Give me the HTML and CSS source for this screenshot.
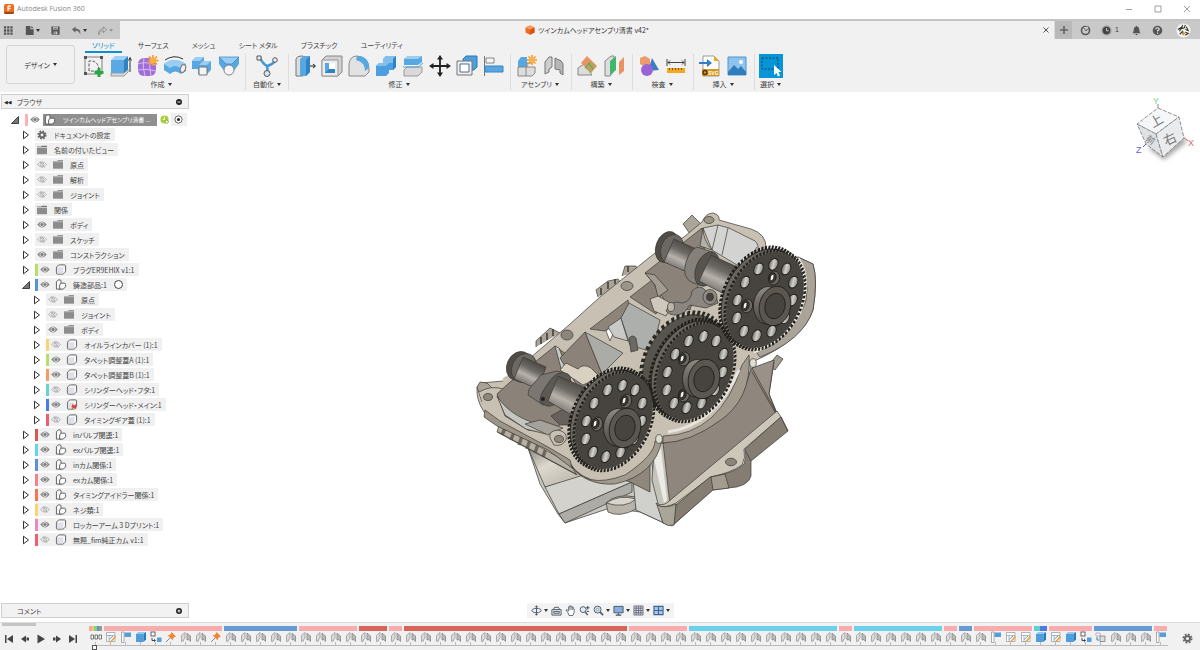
FILE: index.html
```html
<!DOCTYPE html>
<html lang="ja">
<head>
<meta charset="utf-8">
<title>Autodesk Fusion 360</title>
<link rel="stylesheet" href="styles.css">
</head>
<body>
<svg class="defs" aria-hidden="true">
  <defs>
    <linearGradient id="shaft" x1="0" y1="1" x2="0.5" y2="0"><stop offset="0" stop-color="#4b4844"/><stop offset=".3" stop-color="#85807b"/><stop offset=".5" stop-color="#b8b2ac"/><stop offset=".7" stop-color="#6d6964"/><stop offset="1" stop-color="#45423d"/></linearGradient>
    <linearGradient id="hubside" x1="0" y1="0" x2="0" y2="1"><stop offset="0" stop-color="#8f8b85"/><stop offset=".4" stop-color="#706b65"/><stop offset="1" stop-color="#4a4640"/></linearGradient>
    <linearGradient id="holeFill" x1="0" y1="0" x2="1" y2="0"><stop offset="0" stop-color="#6a665f"/><stop offset=".5" stop-color="#d2d2cd"/><stop offset="1" stop-color="#8b877f"/></linearGradient>
    <linearGradient id="shell" x1="0" y1="0" x2="1" y2="1"><stop offset="0" stop-color="#8d887e"/><stop offset=".35" stop-color="#ded9cf"/><stop offset="1" stop-color="#a9a59b"/></linearGradient>
    <symbol id="arrow" viewBox="0 0 8 10"><path d="M1.5 1.2 6.5 5 1.5 8.8Z" fill="#fff" stroke="#333" stroke-width="1"/></symbol>
    <symbol id="arrow-open" viewBox="0 0 8 10"><path d="M7.5 1.5V8.500H.5Z" fill="#777" stroke="#222" stroke-width=".8"/></symbol>
    <symbol id="eye" viewBox="0 0 12 10"><path d="M.8 5Q6-1.6 11.2 5 6 11.600 .8 5Z" fill="#808080"/><circle cx="6" cy="5" r="2.300" fill="none" stroke="#eee" stroke-width=".9"/></symbol>
    <symbol id="eye-off" viewBox="0 0 12 10"><path d="M1 5Q6-1 11 5 6 11 1 5Z" fill="none" stroke="#aaa" stroke-width=".9"/><circle cx="6" cy="5" r="2" fill="none" stroke="#aaa" stroke-width=".9"/><path d="M4 1.500 8.500 8.500" stroke="#aaa" stroke-width=".9"/></symbol>
    <symbol id="folder" viewBox="0 0 12 10"><path d="M1 1.500H5L6 .8H11V2H1Z" fill="#777"/><path d="M1 2.600H11V9.200H1Z" fill="#8c8c8c"/></symbol>
    <symbol id="cog" viewBox="0 0 12 12"><circle cx="6" cy="6" r="4.600" fill="none" stroke="#666" stroke-width="1.800" stroke-dasharray="2 1.610"/><circle cx="6" cy="6" r="2.800" fill="none" stroke="#666" stroke-width="2.200"/></symbol>
    <symbol id="part" viewBox="0 0 12 12"><path d="M1 4.200Q1 3 2 2.400L3.600 1.200Q4 1 5 1H9.800Q11 1 11 2.200V7.500Q11 8.500 10.300 9.200L9 10.500Q8.500 11 7.500 11H2.200Q1 11 1 9.800Z" fill="#fafafa" stroke="#555"/><path d="M2 4H8V10H2ZM8 4 10 2M8 10 10 8" fill="#dfe1ea" stroke="#ddd" stroke-width=".6"/></symbol>
    <symbol id="asm" viewBox="0 0 12 12"><path d="M1 11V3L3 1H4.800Q6 1 6 2.200V11Z" fill="#fafafa" stroke="#555"/><path d="M4.500 11V6.500L6.500 4.500H9.500Q11 4.500 11 6V8.500L8.500 11Z" fill="#fafafa" stroke="#555"/></symbol>
    <symbol id="tl-joint" viewBox="0 0 12 12"><path d="M1.500 10.500V4.500L5 1.500V7.500L3.500 8.500V10Z" fill="#ddd" stroke="#999" stroke-width=".8"/><path d="M7 9V2L8.500 3.500 10.500 5V10.500L9 8.500Z" fill="#bbb" stroke="#888" stroke-width=".8"/></symbol>
    <symbol id="tl-sketch" viewBox="0 0 12 12"><path d="M1.500 1.500H10V10.500H1.500ZM1.500 4.500H10M4 4.500V10.500" fill="#fff" stroke="#8a98a5" stroke-width=".7"/><path d="M4 8.500 8 5" stroke="#5aa1d5"/><path d="M6 10.500 10.500 5.500" stroke="#f2a23a" stroke-width="1.800"/></symbol>
    <symbol id="tl-flag" viewBox="0 0 12 12"><path d="M1.500 1V11.500H4V1Z" fill="#fff" stroke="#888" stroke-width=".7"/><path d="M4.500 1.500H11V6H4.500Z" fill="#549fd8"/></symbol>
    <symbol id="tl-box" viewBox="0 0 12 12"><path d="M1 3H8.500V11H1Z" fill="#4f9fdd"/><path d="M1 3 3 1H11L8.500 3Z" fill="#94c8ee"/><path d="M8.500 3 11 1V8.500L8.500 11Z" fill="#287bb9"/></symbol>
    <symbol id="tl-copy" viewBox="0 0 12 12"><rect x="1" y="1" width="4" height="4" fill="#fff" stroke="#555" stroke-width=".9"/><rect x="7" y="6.500" width="4.500" height="4.500" fill="#549fd8"/><path d="M2 7V9.500H5M4 8.300 5.500 9.500 4 10.600" fill="none" stroke="#333" stroke-width=".9"/></symbol>
    <symbol id="tl-pin" viewBox="0 0 12 12"><path d="M6.500 1 11 5.500 9.500 6 7.800 7.800V9.500L2.500 4.300H4.300L6 2.500Z" fill="#f08434"/><path d="M5 7 1 11" stroke="#888"/></symbol>
    <symbol id="tl-group" viewBox="0 0 12 12"><path d="M1 2H5V5H1Z" fill="#fff" stroke="#999" stroke-width=".7"/><path d="M5 5H10V10.500H5Z" fill="#ddd" stroke="#888" stroke-width=".9"/><path d="M2 6V9H4" fill="none" stroke="#2f88c5"/></symbol>
    <symbol id="tl-origin" viewBox="0 0 12 12"><path d="M1 4H3.500V8H1ZM5 4H7.500V8H5ZM9 4H11.500V8H9Z" fill="#fff" stroke="#555" stroke-width=".8"/></symbol>
    <g id="gear">
      <circle r="97" fill="none" stroke="#24221f" stroke-width="7" pathLength="144" stroke-dasharray="1.200 .8"/>
      <circle r="94" fill="#47443f"/>
      <g fill="url(#holeFill)" stroke="#1e1c1a" stroke-width="2">
        <circle cx="0" cy="-70" r="11.500"/><circle cx="35" cy="-61" r="11.500"/><circle cx="61" cy="-35" r="11.500"/><circle cx="70" cy="0" r="11.500"/><circle cx="61" cy="35" r="11.500"/><circle cx="35" cy="61" r="11.500"/><circle cx="0" cy="70" r="11.500"/><circle cx="-35" cy="61" r="11.500"/><circle cx="-61" cy="35" r="11.500"/><circle cx="-70" cy="0" r="11.500"/><circle cx="-61" cy="-35" r="11.500"/><circle cx="-35" cy="-61" r="11.500"/>
      </g>
    </g>
    <g id="gearback"><circle r="97" fill="none" stroke="#1f1d1b" stroke-width="8" pathLength="144" stroke-dasharray="1.200 .8"/><circle r="94" fill="#6a665f" stroke="#24221f" stroke-width="2"/></g>
    <g id="hub" stroke="#1e1c1a" stroke-width=".8">
      <path d="M-4-19 C-14-22-24-9-21 5-19 14-14 18-8 18L3 20 6-16Z" fill="url(#hubside)"/>
      <ellipse rx="15.500" ry="20" transform="rotate(15)" fill="#5b5750"/>
      <ellipse rx="10" ry="13" transform="rotate(15)" fill="#47433e"/>
    </g>
    <g id="bolt" stroke="#1e1c1a" stroke-width=".8"><ellipse rx="5.500" ry="7" transform="rotate(15)" fill="#6d6962"/><ellipse cx="-1.500" rx="3.500" ry="5" transform="rotate(15)" fill="#3c3935"/><ellipse cx="-2" cy="0" rx="1.800" ry="3.200" transform="rotate(15)" fill="#f4f4f0"/></g>
  </defs>
</svg>

<header class="titlebar">
  <svg class="logo" viewBox="0 0 10 10"><rect width="10" height="10" rx="2" fill="#f26a1b"/><path d="M0 8H10V8.500Q10 10 8 10H2Q0 10 0 8.500Z" fill="#a8420c"/><path d="M4 2H7M4 2V7M4 4.500H6.500" stroke="#fff" stroke-width="1.300" fill="none"/></svg>
  <span class="app-name">Autodesk Fusion 360</span>
  <div class="window-buttons">
    <button aria-label="最小化"><svg viewBox="0 0 8 8"><path d="M1 4.500H7" /></svg></button>
    <button aria-label="最大化"><svg viewBox="0 0 8 8"><path d="M1 1H7V7H1Z"/></svg></button>
    <button aria-label="閉じる"><svg viewBox="0 0 8 8"><path d="M1 1 7 7M7 1 1 7"/></svg></button>
  </div>
</header>

<div class="docbar">
  <div class="quick">
    <button aria-label="データ パネル"><svg viewBox="0 0 12 12"><path d="M1 2.500H10.500M1 6H10.500M1 9.500H10.500" stroke="#555" stroke-width="2.500" stroke-dasharray="2.500 1"/></svg></button>
    <button aria-label="ファイル"><svg viewBox="0 0 12 12"><path d="M2 1H7V4.500H10.500V11H2ZM8 1 10.500 3.500H8Z" fill="#555"/></svg><i class="caret"></i></button>
    <button aria-label="保存"><svg viewBox="0 0 12 12"><path d="M1.500 1.500H10.500V10.500H2.500L1.500 9.500Z" fill="#555"/><path d="M3.500 2H8.500V5H3.500ZM4 7H8V10H4Z" fill="#ccc"/><path d="M4.500 3.500H7.500M5.500 7V10" stroke="#555"/></svg></button>
    <button aria-label="元に戻す"><svg viewBox="0 0 12 12"><path d="M5 1.500 1 5 5 8.500V6.200Q9 6 10 10.500 11.500 4.500 5 3.900Z" fill="#666"/></svg><i class="caret"></i></button>
    <button aria-label="やり直し"><svg viewBox="0 0 12 12"><path d="M7 2 10.500 5 7 8.500V6.200Q3 6 2 10.500 1 4.500 7 3.900Z" fill="none" stroke="#888" stroke-width=".9"/></svg><i class="caret dim"></i></button>
  </div>
  <div class="doc-tab">
    <svg viewBox="0 0 10 10"><path d="M5 .4 9.500 2.500V7.500L5 9.700.5 7.500V2.500Z" fill="#f06a22"/><path d="M5 .4 9.500 2.500 5 4.700.5 2.500Z" fill="#ff9a57"/><path d="M5 4.700 9.500 2.500V7.500L5 9.700Z" fill="#d95410"/></svg>
    <span>ツインカムヘッドアセンブリ清書 v42*</span>
    <button class="tab-close" aria-label="タブを閉じる"><svg viewBox="0 0 8 8"><path d="M1.500 1.500 6.500 6.500M6.500 1.500 1.500 6.500" stroke="#555" stroke-width="1"/></svg></button>
  </div>
  <button class="new-tab" aria-label="新しいデザイン"><svg viewBox="0 0 10 10"><path d="M5 1V9M1 5H9" stroke="#666" stroke-width="1.600"/></svg></button>
  <div class="account">
    <button aria-label="拡張機能"><svg viewBox="0 0 12 12"><circle cx="6" cy="6" r="4.400" fill="none" stroke="#555" stroke-width="1.700"/><path d="M3.500 2.500 6.500 6.500 8 4.500 10 4 9 1.500" fill="#ccc" stroke="#555"/></svg></button>
    <button aria-label="ジョブ ステータス"><svg viewBox="0 0 12 12"><circle cx="6" cy="6" r="5.500" fill="#999"/><circle cx="6" cy="6" r="4" fill="#444"/><path d="M6 3.500V6.300H8.500" stroke="#ddd" fill="none"/></svg><span>1</span></button>
    <button aria-label="通知"><svg viewBox="0 0 12 12"><path d="M1.500 9Q3 7.500 3 5 3 2 5.300 1.600 6 0 6.700 1.600 9 2 9 5 9 7.500 10.500 9ZM4.700 9.700H7.300Q7 11.200 6 11.200 5 11.200 4.700 9.700Z" fill="#555"/></svg></button>
    <button aria-label="ヘルプ"><svg viewBox="0 0 12 12"><circle cx="6" cy="6" r="5.200" fill="#555"/><path d="M4.200 4.700Q4.200 3 6 3 7.800 3 7.800 4.500 7.800 5.400 6.100 6.200V7.200M6.100 8.300V9.500" stroke="#eee" stroke-width="1.300" fill="none"/></svg></button>
    <button class="avatar" aria-label="アカウント"><svg viewBox="0 0 16 16"><circle cx="8" cy="8" r="7.500" fill="#f5f5f0"/><path d="M2 7 5 5 4 9M7 2 6 6 9 5 10 2M11 4 13 8 10 7M4 12 7 9 8 13M10 10 13 11 10 13" stroke="#333" fill="none" stroke-width="1.200"/><path d="M7 9 9 11 8 13" stroke="#d9a82f" stroke-width="1.500" fill="none"/></svg></button>
  </div>
</div>

<div class="ribbon">
  <button class="workspace-switch">デザイン<i class="caret"></i></button>
  <div class="ribbon-main">
    <nav class="tabs">
      <button class="tab active">ソリッド</button><button class="tab">サーフェス</button><button class="tab">メッシュ</button><button class="tab">シート メタル</button><button class="tab">プラスチック</button><button class="tab">ユーティリティ</button>
    </nav>
    <div class="groups">
      <section class="group">
        <div class="tools">
          <button aria-label="スケッチを作成"><svg viewBox="0 0 24 24"><path d="M3 3H20V20H3Z" fill="none" stroke="#666" stroke-width=".8"/><path d="M7 17V7H11Q17 9 17 17Z" fill="none" stroke="#555" stroke-dasharray="3 1.500"/><path d="M2 2H5V5H2ZM18 2H21V5H18ZM2 18H5V21H2Z" fill="#555"/><path d="M17 14V23M12.500 18.500H21.500" stroke="#28a745" stroke-width="3"/></svg></button>
          <button aria-label="押し出し"><svg viewBox="0 0 24 24"><path d="M2 19 15 19 19 15V18L15 22H2Z" fill="#ddd" stroke="#777" stroke-width=".7"/><path d="M2 6H15V19H2Z" fill="#5aa9e2"/><path d="M2 6 6 2H19L15 6Z" fill="#9fd0f3"/><path d="M15 6 19 2V15L15 19Z" fill="#2e83c4"/><path d="M21 18V4M19.500 6.500 21 3.500 22.500 6.500" stroke="#333" fill="none"/></svg></button>
          <button aria-label="フォーム"><svg viewBox="0 0 24 24"><rect x="2" y="4" width="18" height="18" rx="6" fill="#a06ed8"/><path d="M2 10Q9 7 20 11M2 16Q10 14 20 17M8 4Q6 13 9 22M14 4Q13 13 15 22" stroke="#d9bdf3" fill="none"/><path d="M17 1V12M11.500 6.500H22.500M13 2.500 21 10.500M21 2.500 13 10.500" stroke="#f6971e" stroke-width="1.600"/><circle cx="17" cy="6.500" r="3" fill="#fbb040"/></svg></button>
          <button aria-label="回転"><svg viewBox="0 0 24 24"><path d="M1 10Q11 2 23 10V17L18 20Q12 15 7 20L1 16Z" fill="#57a7e0"/><path d="M1 10Q11 2 23 10L17 14Q12 10 7 14Z" fill="#9bcdf2"/><path d="M2 6Q11 0 20 5" stroke="#333" fill="none"/><ellipse cx="20" cy="14.500" rx="2.500" ry="4" fill="#eee" stroke="#777" transform="rotate(20 20 14.500)"/></svg></button>
          <button aria-label="結合"><svg viewBox="0 0 24 24"><path d="M2 7 6 3H14V7H21V16L17 20H8V15H2Z" fill="#57a7e0"/><path d="M2 7 6 3H14L10 7ZM9 11 13 7H21L17 11Z" fill="#9bcdf2"/><path d="M9 13H17V21H9Z" fill="#f4f4f4" stroke="#777"/></svg></button>
          <button aria-label="ロフト"><svg viewBox="0 0 24 24"><path d="M2 3H22V10L16 18H8L2 10Z" fill="#57a7e0"/><path d="M2 3H22L15 10H9Z" fill="#9bcdf2" stroke="#2e83c4" stroke-width=".7"/><circle cx="12" cy="16" r="5" fill="#f6f6f6" stroke="#888"/></svg></button>
        </div>
        <button class="group-label">作成<i class="caret"></i></button>
      </section>
      <section class="group auto">
        <div class="tools"><button aria-label="自動モデリング"><svg viewBox="0 0 24 24"><path d="M5 4Q8 10 12 12 17 11 20 7M12 12Q13 15 12 20" stroke="#4596d3" stroke-width="2.500" fill="none"/><path d="M2 2H6V6H2Z" fill="#eee" stroke="#555"/><circle cx="20" cy="6" r="2.300" fill="#eee" stroke="#555"/><circle cx="12" cy="19.500" r="3" fill="#cfe4f5" stroke="#555"/></svg></button></div>
        <button class="group-label">自動化<i class="caret"></i></button>
      </section>
      <section class="group">
        <div class="tools">
          <button aria-label="プレス/プル"><svg viewBox="0 0 24 24"><path d="M3 22V5Q4 2 8 2H10V22Z" fill="#ddd" stroke="#777"/><path d="M7 22V5L11 2H17V18L13 22Z" fill="#57a7e0"/><path d="M13 22V6L17 2V18Z" fill="#2e83c4"/><path d="M17 12H22M20 10 22.500 12 20 14" stroke="#222" fill="none"/></svg></button>
          <button aria-label="シェル"><svg viewBox="0 0 24 24"><path d="M2 6 6 2H22V18L18 22H2Z" fill="#d2d2d2" stroke="#888"/><path d="M2 6H18V22H2Z" fill="#ececec" stroke="#999"/><path d="M5 9H15V19H5Z" fill="#fff"/><path d="M5 9H9V15H15V19H5Z" fill="#57a7e0"/><path d="M5 19 9 15H15V19Z" fill="#2e83c4"/></svg></button>
          <button aria-label="フィレット"><svg viewBox="0 0 24 24"><path d="M2 22V10Q3 2 10 2 22 3 22 15V18L18 22Z" fill="#e2e2e2" stroke="#888"/><path d="M10 2Q22 2 22 14L18 17Q18 8 9 6Z" fill="#57a7e0"/></svg></button>
          <button aria-label="結合 (ボディ)"><svg viewBox="0 0 24 24"><path d="M2 12 5 9H9V5L12 2H22V13L19 16H15V19L12 22H2Z" fill="#4b9fde"/><path d="M2 12 5 9H9V5L12 2H22L19 5V9H15L12 12Z" fill="#82bfec"/><path d="M19 5 22 2V13L19 16Z" fill="#2e83c4"/></svg></button>
          <button aria-label="面を分割"><svg viewBox="0 0 24 24"><path d="M3 16 6 13H21V18L17 22H3Z" fill="#d9d9d9" stroke="#888" stroke-width=".8"/><path d="M3 5 7 2H21V8L17 11H3Z" fill="#57a7e0"/><path d="M3 5 7 2H21L17 5Z" fill="#9bcdf2"/><path d="M2 13H17L22 9" stroke="#4b9fde" fill="none"/></svg></button>
          <button aria-label="移動/コピー"><svg viewBox="0 0 24 24"><path d="M12 3V21M3 12H21" stroke="#222" stroke-width="1.800"/><path d="M12 1 15 5.500H9ZM12 23 15 18.500H9ZM1 12 5.500 9V15ZM23 12 18.500 9V15Z" fill="#222"/></svg></button>
          <button aria-label="オフセット"><svg viewBox="0 0 24 24"><path d="M8 5 11 2H22V13L19 16H8Z" fill="#4b9fde" stroke="#2e76b0"/><path d="M2 7H17V21H2Z" fill="#eee" stroke="#777"/><path d="M5 10H14V18H5Z" fill="#fff" stroke="#4b6e90"/></svg></button>
          <button aria-label="位置合わせ"><svg viewBox="0 0 24 24"><path d="M2.500 2V22" stroke="#777"/><path d="M4 4H12V9H4Z" fill="#f5f5f5" stroke="#888"/><path d="M3 12H21V18H3Z" fill="#57a7e0" stroke="#3a86c2"/></svg></button>
        </div>
        <button class="group-label">修正<i class="caret"></i></button>
      </section>
      <section class="group pair">
        <div class="tools">
          <button aria-label="新規コンポーネント"><svg viewBox="0 0 24 24"><path d="M3 13V7L6 3H12V13Z" fill="#57a7e0"/><path d="M3 13H20V19L17 22H3ZM11 13V22M12 13V9H17" fill="#ddd" stroke="#888"/><path d="M17 1V11M12 6H22M13.500 2.500 20.500 9.500M20.500 2.500 13.500 9.500" stroke="#f6971e" stroke-width="1.500"/><circle cx="17" cy="6" r="2.500" fill="#fbb040"/></svg></button>
          <button aria-label="ジョイント"><svg viewBox="0 0 24 24"><path d="M3 20V8L7 3H10V13L7 15V18Z" fill="#cfcfcf" stroke="#777"/><path d="M13 15V4L15 5Q20 6 21 10V21L18 19V16Z" fill="#b5b8ba" stroke="#777"/></svg></button>
        </div>
        <button class="group-label">アセンブリ<i class="caret"></i></button>
      </section>
      <section class="group pair">
        <div class="tools">
          <button aria-label="オフセット平面"><svg viewBox="0 0 24 24"><path d="M2 21V14L8 10 16 21Z" fill="#ddd" stroke="#888"/><path d="M11 2 21 12 15 19 5 9Z" fill="#e79363"/><path d="M9 14 15 7 20 12 15 19Z" fill="#b9a35e"/><path d="M9 14 13 9 17 15" stroke="#3daa5c" fill="none"/></svg></button>
          <button aria-label="中立面"><svg viewBox="0 0 24 24"><path d="M2 20V7L8 2H11V17L7 22H2Z" fill="#ddd" stroke="#888"/><path d="M7 21V7L13 2V16Z" fill="#3fb86b"/><path d="M16 21V8L21 3V17Z" fill="#e79363"/></svg></button>
        </div>
        <button class="group-label">構築<i class="caret"></i></button>
      </section>
      <section class="group pair">
        <div class="tools">
          <button aria-label="干渉"><svg viewBox="0 0 24 24"><path d="M3 4 8 2 13 5V11L8 13 3 10Z" fill="#ed9a6c"/><path d="M15 4 22 16 11 17Z" fill="#3d7cc0"/><circle cx="10" cy="16" r="6" fill="#9a63d6"/></svg></button>
          <button aria-label="計測"><svg viewBox="0 0 24 24"><path d="M3 5V12M21 5V12M4 8.500H20M6 6.500 4 8.500 6 10.500M18 6.500 20 8.500 18 10.500" stroke="#444" fill="none"/><path d="M3 14H21V19H3Z" fill="#f2a922"/><path d="M5 15H20" stroke="#7a5510" stroke-width="2" stroke-dasharray="1 2"/></svg></button>
        </div>
        <button class="group-label">検査<i class="caret"></i></button>
      </section>
      <section class="group pair">
        <div class="tools">
          <button aria-label="SVG を挿入"><svg viewBox="0 0 24 24"><path d="M5 2H16L21 7V22H5Z" fill="#fff" stroke="#999"/><path d="M16 2 21 7H16Z" fill="#f2a922"/><path d="M1 8H9V5L14 9 9 13V10H1Z" fill="#2e7fc4"/><path d="M4 15H21V22H4Z" fill="#d9981f"/><circle cx="7" cy="18.500" r="2" fill="none" stroke="#4a3000" stroke-width="1.300"/><text x="10" y="21" class="svg-tag">SVG</text></svg></button>
          <button aria-label="キャンバス"><svg viewBox="0 0 24 24"><path d="M3 3H21V21H3Z" fill="#8fc4ee" stroke="#4f94cc"/><path d="M3 18 9 11 13 15 16 12 21 18V21H3Z" fill="#2f7db9"/><circle cx="16" cy="8" r="2" fill="#fff"/></svg></button>
        </div>
        <button class="group-label">挿入<i class="caret"></i></button>
      </section>
      <section class="group">
        <div class="tools">
          <button aria-label="選択"><svg viewBox="0 0 24 24"><path d="M0 0H24V24H0Z" fill="#0696d7"/><path d="M3 4H19V15H3Z" fill="none" stroke="#133f66" stroke-dasharray="2 1.500"/><path d="M15 11V21L17.500 19 19 22.500 21 21.500 19.500 18H22.500Z" fill="#fff"/></svg></button>
        </div>
        <button class="group-label">選択<i class="caret"></i></button>
      </section>
    </div>
  </div>
</div>

<main class="workspace">
  <aside class="browser">
    <div class="panel-head"><span class="collapse">◀◀</span><span>ブラウザ</span><button class="dot" aria-label="ブラウザを閉じる"><svg viewBox="0 0 8 8"><circle cx="4" cy="4" r="3" fill="#222"/><path d="M2.500 4H5.500" stroke="#eee"/></svg></button></div>
    <ul class="tree">
      <li class="row root"><svg class="tw"><use href="#arrow-open"/></svg><span class="bar pink"></span><svg class="ic eye"><use href="#eye"/></svg><span class="selected"><svg class="ic"><use href="#asm"/></svg><span>ツインカムヘッドアセンブリ清書 ...</span></span><svg class="badge" viewBox="0 0 10 10"><circle cx="5" cy="5" r="4.500" fill="#a8cf38"/><path d="M5 2V5H3" stroke="#fff" fill="none"/><circle cx="7.500" cy="7.500" r="1.800" fill="#fff" stroke="#789a1c" stroke-width=".8"/></svg><span class="pill end"><svg class="badge" viewBox="0 0 10 10"><circle cx="5" cy="5" r="4" fill="#fff" stroke="#333" stroke-width=".8"/><circle cx="5" cy="5" r="1.700" fill="#222"/></svg></span></li>
      <li class="row"><svg class="tw"><use href="#arrow"/></svg><span class="pill solo"><svg class="ic"><use href="#cog"/></svg><span>ドキュメントの設定</span></span></li>
      <li class="row"><svg class="tw"><use href="#arrow"/></svg><span class="pill solo"><svg class="ic"><use href="#folder"/></svg><span>名前の付いたビュー</span></span></li>
      <li class="row"><svg class="tw"><use href="#arrow"/></svg><span class="pill"><svg class="ic eye"><use href="#eye-off"/></svg><svg class="ic"><use href="#folder"/></svg><span>原点</span></span></li>
      <li class="row"><svg class="tw"><use href="#arrow"/></svg><span class="pill"><svg class="ic eye"><use href="#eye-off"/></svg><svg class="ic"><use href="#folder"/></svg><span>解析</span></span></li>
      <li class="row"><svg class="tw"><use href="#arrow"/></svg><span class="pill"><svg class="ic eye"><use href="#eye-off"/></svg><svg class="ic"><use href="#folder"/></svg><span>ジョイント</span></span></li>
      <li class="row"><svg class="tw"><use href="#arrow"/></svg><span class="pill solo"><svg class="ic"><use href="#folder"/></svg><span>関係</span></span></li>
      <li class="row"><svg class="tw"><use href="#arrow"/></svg><span class="pill"><svg class="ic eye"><use href="#eye"/></svg><svg class="ic"><use href="#folder"/></svg><span>ボディ</span></span></li>
      <li class="row"><svg class="tw"><use href="#arrow"/></svg><span class="pill"><svg class="ic eye"><use href="#eye-off"/></svg><svg class="ic"><use href="#folder"/></svg><span>スケッチ</span></span></li>
      <li class="row"><svg class="tw"><use href="#arrow"/></svg><span class="pill"><svg class="ic eye"><use href="#eye"/></svg><svg class="ic"><use href="#folder"/></svg><span>コンストラクション</span></span></li>
      <li class="row"><svg class="tw"><use href="#arrow"/></svg><span class="pill"><i class="bar lime"></i><svg class="ic eye"><use href="#eye"/></svg><svg class="ic"><use href="#part"/></svg><span>プラグER9EHIX v1:1</span></span></li>
      <li class="row"><svg class="tw"><use href="#arrow-open"/></svg><span class="pill"><i class="bar blue"></i><svg class="ic eye"><use href="#eye"/></svg><svg class="ic"><use href="#asm"/></svg><span>鋳造部品:1</span><input type="radio" aria-label="鋳造部品をアクティブ化"></span></li>
      <li>
        <ul class="tree child">
          <li class="row"><svg class="tw"><use href="#arrow"/></svg><span class="pill"><svg class="ic eye"><use href="#eye-off"/></svg><svg class="ic"><use href="#folder"/></svg><span>原点</span></span></li>
          <li class="row"><svg class="tw"><use href="#arrow"/></svg><span class="pill"><svg class="ic eye"><use href="#eye-off"/></svg><svg class="ic"><use href="#folder"/></svg><span>ジョイント</span></span></li>
          <li class="row"><svg class="tw"><use href="#arrow"/></svg><span class="pill"><svg class="ic eye"><use href="#eye"/></svg><svg class="ic"><use href="#folder"/></svg><span>ボディ</span></span></li>
          <li class="row"><svg class="tw"><use href="#arrow"/></svg><span class="pill"><i class="bar yellow"></i><svg class="ic eye"><use href="#eye-off"/></svg><svg class="ic"><use href="#part"/></svg><span>オイルラインカバー (1):1</span></span></li>
          <li class="row"><svg class="tw"><use href="#arrow"/></svg><span class="pill"><i class="bar lime"></i><svg class="ic eye"><use href="#eye"/></svg><svg class="ic"><use href="#part"/></svg><span>タペット調整蓋A (1):1</span></span></li>
          <li class="row"><svg class="tw"><use href="#arrow"/></svg><span class="pill"><i class="bar orange"></i><svg class="ic eye"><use href="#eye"/></svg><svg class="ic"><use href="#part"/></svg><span>タペット調整蓋B (1):1</span></span></li>
          <li class="row"><svg class="tw"><use href="#arrow"/></svg><span class="pill"><i class="bar teal"></i><svg class="ic eye"><use href="#eye-off"/></svg><svg class="ic"><use href="#part"/></svg><span>シリンダーヘッド・フタ:1</span></span></li>
          <li class="row"><svg class="tw"><use href="#arrow"/></svg><span class="pill"><i class="bar royal"></i><svg class="ic eye"><use href="#eye"/></svg><svg class="ic" viewBox="0 0 12 12"><use href="#part" width="12" height="12"/><path d="M6 6 10.500 10.500M10.500 6 6 10.500M5.500 8.200H11" stroke="#d9432e" stroke-width="1.300"/></svg><span>シリンダーヘッド・メイン:1</span></span></li>
          <li class="row"><svg class="tw"><use href="#arrow"/></svg><span class="pill"><i class="bar rose"></i><svg class="ic eye"><use href="#eye-off"/></svg><svg class="ic"><use href="#part"/></svg><span>タイミングギア蓋 (1):1</span></span></li>
        </ul>
      </li>
      <li class="row"><svg class="tw"><use href="#arrow"/></svg><span class="pill"><i class="bar red"></i><svg class="ic eye"><use href="#eye"/></svg><svg class="ic"><use href="#asm"/></svg><span>inバルブ関連:1</span></span></li>
      <li class="row"><svg class="tw"><use href="#arrow"/></svg><span class="pill"><i class="bar cyan"></i><svg class="ic eye"><use href="#eye"/></svg><svg class="ic"><use href="#asm"/></svg><span>exバルブ関連:1</span></span></li>
      <li class="row"><svg class="tw"><use href="#arrow"/></svg><span class="pill"><i class="bar blue"></i><svg class="ic eye"><use href="#eye"/></svg><svg class="ic"><use href="#asm"/></svg><span>inカム関係:1</span></span></li>
      <li class="row"><svg class="tw"><use href="#arrow"/></svg><span class="pill"><i class="bar salmon"></i><svg class="ic eye"><use href="#eye"/></svg><svg class="ic"><use href="#asm"/></svg><span>exカム関係:1</span></span></li>
      <li class="row"><svg class="tw"><use href="#arrow"/></svg><span class="pill"><i class="bar coral"></i><svg class="ic eye"><use href="#eye"/></svg><svg class="ic"><use href="#asm"/></svg><span>タイミングアイドラー関係:1</span></span></li>
      <li class="row"><svg class="tw"><use href="#arrow"/></svg><span class="pill"><i class="bar yellow"></i><svg class="ic eye"><use href="#eye-off"/></svg><svg class="ic"><use href="#asm"/></svg><span>ネジ類:1</span></span></li>
      <li class="row"><svg class="tw"><use href="#arrow"/></svg><span class="pill"><i class="bar violet"></i><svg class="ic eye"><use href="#eye"/></svg><svg class="ic"><use href="#part"/></svg><span>ロッカーアーム 3 Dプリント:1</span></span></li>
      <li class="row"><svg class="tw"><use href="#arrow"/></svg><span class="pill"><i class="bar rose"></i><svg class="ic eye"><use href="#eye-off"/></svg><svg class="ic"><use href="#part"/></svg><span>無題_fim純正カム v1:1</span></span></li>
    </ul>
  </aside>

  <div class="viewport">
    <svg class="model" viewBox="470 203 352 330" role="img" aria-label="シリンダーヘッド アセンブリ">
      <g stroke="#3b3833" stroke-width=".7" stroke-linejoin="round">
        <!-- lower casting -->
        <path d="M528 448 540 484 558 514 565 523 610 508 640 512 664 523 672 526 712 490 650 430 575 462Z" fill="#c9c7c1"/>
        <path d="M528 448 545 487Q575 478 600 478L575 464Z" fill="url(#shell)"/>
        <path d="M545 487 590 473 632 482 559 514Z" fill="#d3d2cd"/>
        <path d="M559 514 632 482V492L565 523Z" fill="#aeaca6"/>
        <path d="M606 503Q616 493 636 497V509Q620 518 608 512Z" fill="#b8b4aa"/>
        <path d="M606 503Q620 494 636 499 625 509 606 503Z" fill="#d9d6ce"/>
        <path d="M632 470 650 455 664 523 636 510Z" fill="#d0d0cc"/>
        <path d="M622 478 650 458V492Z" fill="#8f877b"/>
        <path d="M655 440 664 444 672 505 673 525 663 523 652 480Z" fill="#c6c3bb"/>
        <path d="M660 441 667 500 664 503 652 450Z" fill="#ecebe5" stroke="none"/>
        <!-- front wall and base -->
        <path d="M777 355 783 359 775 370 768 366Z" fill="#a09a8f"/>
        <path d="M663 443Q720 438 752 368L774 362 769 394 777 413 670 505Z" fill="#8f877d"/>
        <path d="M752 368 774 360 769 394 776 412Z" fill="#9a9288"/>
        <path d="M752 372 776 414" fill="none"/>
        <path d="M656 503Q662 507 668 502L777 411 781 417 744 449Q746 458 742 465 730 473 711 477L676 503Q664 509 657 505Z" fill="#cdc7ba"/>
        <path d="M676 505 710 477Q735 473 744 464 747 456 745 449L781 417 788 431 751 461V476Q748 487 728 488L713 490 673 525Z" fill="#857d72"/>
        <path d="M657 505Q665 509 676 504L674 525Q668 527 663 523Z" fill="#aaa599"/>
        <path d="M711 477 725 474 729 488 713 490Z" fill="#a39b8e"/>
        <ellipse cx="731" cy="462" rx="5.500" ry="3.800" fill="#8b8579"/>
        <path d="M781 417 788 431M745 450 751 461" fill="none"/>
        <!-- cooling fins -->
        <path d="M500 422 560 450 577 475 497 432Z" fill="#b7b1a5"/>
        <path d="M505 428 502 435M514 432 511 440M522 436 519 445M530 440 527 449M538 444 535 453M546 448 543 457" stroke="#6e685e" stroke-width="3.500"/>
        <path d="M498 432 576 474" fill="none"/>
        <!-- rim -->
        <path d="M598 297 596 290 608 281 618 279 622 285M622 276 625 266 636 266 638 272M536 347 536 341 550 328 560 333M690 234 683 224 692 215 701 224" fill="#aba599"/>
        <path d="M601 295V288M608 289V282M615 284V279M628 272V266M541 344V337M547 340V333M553 336V329" fill="none" stroke-width="1.500"/>
        <path d="M477 387 481 383 503 381 537 352 569 325 600 297 655 253 684 237 702 222Q706 213 713 213 720 215 719 220L751 229Q766 234 766 247L765 262 798 257 813 264Q818 280 813 310 803 340 752 362 746 400 717 422 690 440 660 443 645 480 603 483 578 478 570 463 548 452 535 444 497 423 484 412Q476 400 477 387Z" fill="#c8c1b3"/>
        <path d="M813 264Q818 280 813 310 803 340 760 357L756 352Q795 335 806 300 810 280 798 257Z" fill="#aaa397"/>
        <path d="M798 258Q812 280 800 312 787 338 754 352" fill="none" stroke="#eeece4" stroke-width="3"/>
        <path d="M570 464Q585 490 625 475 655 455 655 441L662 440Q655 475 615 484 585 486 570 464Z" fill="#a19a8d"/>
        <path d="M663 436Q720 435 742 365L749 355Q752 400 718 422 690 442 663 443Z" fill="#a19a8d"/>
        <path d="M668 432Q715 425 739 370" fill="none" stroke="#e7e5df" stroke-width="3"/>
        <ellipse cx="753" cy="363" rx="3.300" ry="4.300" fill="#e0ddd5"/><ellipse cx="659" cy="439" rx="3.300" ry="4.300" fill="#e0ddd5"/>
        <!-- bolt bosses -->
        <path d="M477 387 480 382 487 383 493 389 497 394 482 402Z" fill="#a9a397"/>
        <path d="M479 392Q491 385 503 389V378L520 368 585 420 600 470 570 463 535 444 485 410Z" fill="#c8c1b3" stroke="none"/>
        <path d="M479 392Q491 385 503 389" fill="none"/>
        <ellipse cx="488" cy="397" rx="4.500" ry="3.500" fill="#8d867b"/>
        <ellipse cx="567" cy="335" rx="6" ry="5" fill="#8d867b"/><ellipse cx="627" cy="286" rx="6" ry="4.500" fill="#9b9589"/><ellipse cx="709" cy="220" rx="5" ry="3.500" fill="#9b9589"/>
        <path d="M485 410 484 417 497 426 548 450 572 468 570 460 548 447 500 421Z" fill="#9c9588"/>
        <!-- interior pockets -->
        <path d="M497 394 510 382 555 346 566 354 572 400 560 425 548 433 528 430 505 416Z" fill="#8b8379"/>
        <path d="M497 396Q512 420 550 427L546 434 526 429 505 415Z" fill="#c6c6c1"/>
        <path d="M525 424 540 420 563 428 548 435Z" fill="#a7a299"/>
        <path d="M550 438Q548 431 558 430 568 432 566 440 562 447 554 445Z" fill="#c8c1b3"/><ellipse cx="559" cy="439" rx="4.500" ry="3.500" fill="#8d867b"/>
        <path d="M555 346 559 348 568 372 563 376Z" fill="#c9c9c5"/>
        <path d="M560 358 585 332 602 374 580 390 566 368Z" fill="#8b8379"/>
        <path d="M585 332 623 353 602 374Z" fill="#abaca8"/>
        <path d="M590 329 628 300 630 312 605 331Z" fill="#8d857a"/>
        <path d="M606 331 618 321 610 341Z" fill="#fff"/>
        <path d="M608 327 621 318 628 341 614 337Z" fill="#c9cac7"/>
        <path d="M621 318 629 303 660 320 652 352 630 345Z" fill="#adafac"/>
        <path d="M630 297 652 280 662 300 656 314Z" fill="#8a8278"/>
        <path d="M645 273 702 228 706 262 690 310 668 306 655 285Z" fill="#8b8379"/>
        <path d="M645 273 655 285 658 297 668 290 655 275Z" fill="#a39c91"/>
        <path d="M703 228 718 225 729 228 755 241Q759 244 758 253L742 268 712 250Z" fill="#d3d4d1"/>
        <path d="M718 225 712 250M728 228 722 255M757 247 745 265" fill="none"/>
        <path d="M703 228Q703 240 712 250L700 246Z" fill="#b3b0a8"/>
        <path d="M650 299 658 296 672 304 666 316 654 311Z" fill="#cfc9bd"/>
        <path d="M666 311Q671 299 682 303 691 302 692 291 700 283 706 291L716 296 718 303 706 308 690 305 684 313Q672 318 666 311Z" fill="#8c8680"/>
        <ellipse cx="710" cy="297" rx="7" ry="7.500" fill="#8f8a84"/><ellipse cx="710" cy="297" rx="3.500" ry="4" fill="#46423d"/><ellipse cx="671" cy="307" rx="3.500" ry="4.500" fill="#bbb5aa"/>
        <path d="M560 370 566 363 578 369Q583 363 591 368L600 377 583 385Z" fill="#d8d0c1"/>
        <path d="M551 416 565 408 573 413 572 425 560 425Z" fill="#66615b"/>
        <path d="M629 338Q633 334 636 338L638 350 631 352Z" fill="#6c6862"/>
        <!-- intake camshaft -->
        <g fill="#5b5752">
          <ellipse cx="519" cy="366" rx="12" ry="15" transform="rotate(25 519 366)" fill="#504d48"/>
          <ellipse cx="524" cy="368" rx="12" ry="15" transform="rotate(25 524 368)" fill="#6b6762"/>
          <path d="M523 357 546 367 538 389 514 379Z" fill="url(#shaft)"/>
          <path d="M529 389 541 375 557 371Q568 373 571 381L550 404 543 405 528 395Z" fill="#7b7671"/>
          <path d="M541 403Q537 398 549 382 558 369 568 374 575 379 564 393 556 408 547 406Z" fill="#5d5954"/>
          <path d="M558 376 593 391 578 419 548 401Z" fill="url(#shaft)"/><circle cx="543" cy="399" r="2" fill="#1e1c1a"/>
        </g>
        <!-- exhaust camshaft -->
        <g>
          <ellipse cx="667" cy="247" rx="11" ry="16" transform="rotate(20 667 247)" fill="#504d48"/>
          <ellipse cx="672" cy="249" rx="11" ry="15" transform="rotate(20 672 249)" fill="#6b6762"/>
          <path d="M674 239 703 252 694 275 664 262Z" fill="url(#shaft)"/>
          <path d="M697 247 713 252 719 261 704 286 693 283Q681 278 686 262 690 250 697 247Z" fill="#85807a"/>
          <ellipse cx="707" cy="269" rx="11" ry="18" transform="rotate(22 707 269)" fill="#57534e"/>
          <path d="M711 255 744 270 730 297 699 281Z" fill="url(#shaft)"/>
        </g>
      </g>
      <!-- gear train -->
      <g transform="matrix(.41 0 -.12 .5 683 362)"><circle r="96" fill="#57534d"/><circle r="98" fill="none" stroke="#2b2926" stroke-width="10" pathLength="100" stroke-dasharray="1.100 .9"/></g>
      <use href="#gearback" transform="matrix(.395 0 -.12 .51 690 369)"/>
      <use href="#gear" transform="matrix(.395 0 -.12 .51 695 372)"/>
      <use href="#gearback" transform="matrix(.395 0 -.12 .51 760 297)"/>
      <use href="#gear" transform="matrix(.395 0 -.12 .51 765 300)"/>
      <use href="#gearback" transform="matrix(.395 0 -.12 .51 609 418)"/>
      <use href="#gear" transform="matrix(.395 0 -.12 .51 614 421)"/>
      <use href="#bolt" x="684" y="359"/><use href="#bolt" x="684" y="395"/>
      <use href="#bolt" x="774" y="278"/><use href="#bolt" x="747" y="306"/>
      <use href="#bolt" x="626" y="401"/><use href="#bolt" x="597" y="424"/>
      <use href="#hub" x="704" y="379"/><use href="#hub" x="775" y="306"/><use href="#hub" x="625" y="428"/>
    </svg>
  </div>

  <div class="cube-area">
    <svg class="cube" viewBox="1132 94 64 72" role="img" aria-label="ビューキューブ">
      <defs><filter id="soft"><feGaussianBlur stdDeviation="2"/></filter></defs>
      <path d="M1148 148 1164 160 1187 142 1180 135Z" fill="#aaa" filter="url(#soft)"/>
      <g stroke="#777" stroke-width=".8" stroke-dasharray="4 1.500" stroke-linejoin="round">
        <path d="M1158 108 1179 117 1156 134 1137 124Z" fill="#f5f6f7"/>
        <path d="M1137 124 1156 134 1163 157 1146 144Z" fill="#dfe1e4"/>
        <path d="M1156 134 1179 117 1184 138 1163 157Z" fill="#e9ebed"/>
      </g>
      <path d="M1158 104V108" stroke="#888"/><path d="M1143 147 1146 144" stroke="#55c"/><path d="M1184 138 1188 141" stroke="#d66"/>
      <text x="1153" y="104" class="axis" fill="#6fdc86">Y</text><text x="1136" y="153" class="axis" fill="#6363dd">Z</text><text x="1188" y="146" class="axis" fill="#e0686c">X</text>
      <text class="face" transform="translate(1153 128) rotate(-30)">上</text><text class="face" transform="translate(1166 146) rotate(-25)">右</text><text class="face small" transform="translate(1145 140) rotate(35)">前</text>
    </svg>
  </div>

  <div class="bottom">
    <div class="panel-head comment"><span>コメント</span><button class="dot" aria-label="コメントを追加"><svg viewBox="0 0 8 8"><circle cx="4" cy="4" r="3" fill="#222"/><path d="M2.500 4H5.500M4 2.500V5.500" stroke="#eee"/></svg></button></div>
    <div class="navbar">
      <button aria-label="オービット"><svg viewBox="0 0 12 12"><ellipse cx="6" cy="6" rx="5" ry="2.200" fill="none" stroke="#456"/><path d="M6 1V11M4.500 2.500 6 .8 7.500 2.500M4.500 9.500 6 11.200 7.500 9.500" fill="none" stroke="#456"/></svg><i class="caret"></i></button>
      <button aria-label="ビューを表示"><svg viewBox="0 0 12 12"><path d="M1 5H11V11H1ZM2.500 5 4 2.500H8L9.500 5M3 7H9V9H3Z" fill="#eee" stroke="#456"/></svg></button>
      <button aria-label="画面移動"><svg viewBox="0 0 12 12"><path d="M3 8 1 5.500 2.200 5 4 6.500V2H5V1H6.300V1.500H7.600V2.500H9V4L10 4.500V8L8.500 11.500H4.500Z" fill="#fff" stroke="#456" stroke-width=".9"/><path d="M5.300 2V5.500M6.700 2V5.500M8.200 3V5.500" stroke="#456" stroke-width=".7"/></svg></button>
      <button aria-label="ズーム"><svg viewBox="0 0 12 12"><circle cx="4.500" cy="5" r="3.200" fill="#e4ecf5" stroke="#456"/><path d="M6.800 7.500 9.500 11" stroke="#456" stroke-width="1.600"/><path d="M9.500 1V5M7.800 3H11.500M8.500 7H11" stroke="#345"/></svg></button>
      <button aria-label="フィット"><svg viewBox="0 0 12 12"><circle cx="5" cy="5" r="3.800" fill="#e4ecf5" stroke="#456"/><path d="M3.500 3.500H6.500V6.500H3.500Z" fill="none" stroke="#789" stroke-width=".7"/><path d="M7.800 7.800 11 11" stroke="#456" stroke-width="1.700"/></svg><i class="caret"></i></button>
      <button aria-label="表示設定"><svg viewBox="0 0 12 12"><path d="M1 1.500H11V8.500H1Z" fill="#88aedd" stroke="#456"/><path d="M3 11H9M6 9V11" stroke="#456" stroke-width="1.500"/></svg><i class="caret"></i></button>
      <button aria-label="グリッド"><svg viewBox="0 0 12 12"><path d="M1 1H11V11H1ZM1 3.500H11M1 6H11M1 8.500H11M3.500 1V11M6 1V11M8.500 1V11" fill="#c9d0d8" stroke="#667" stroke-width=".8"/></svg><i class="caret"></i></button>
      <button aria-label="ビューポート"><svg viewBox="0 0 12 12"><path d="M1 1.500H11V10.500H1ZM1 6H11M6 1.500V10.500" fill="#a8c6ea" stroke="#3f658f" stroke-width="1.200"/></svg><i class="caret"></i></button>
    </div>
  </div>
</main>

<footer class="timeline">
  <div class="playback">
    <div class="thumb"></div>
    <div class="transport">
      <button aria-label="先頭へ"><svg viewBox="0 0 10 10"><path d="M1 1H2.500V9H1ZM9 1V9L3 5Z" fill="#444"/></svg></button>
      <button aria-label="前へ"><svg viewBox="0 0 10 10"><path d="M6 1.500V8.500L1 5ZM6.500 3.500H9V6.500H6.500Z" fill="#444"/></svg></button>
      <button aria-label="再生"><svg viewBox="0 0 10 10"><path d="M1.500 .5 9 5 1.500 9.500Z" fill="#444"/></svg></button>
      <button aria-label="次へ"><svg viewBox="0 0 10 10"><path d="M4 1.500V8.500L9 5ZM1 3.500H3.500V6.500H1Z" fill="#444"/></svg></button>
      <button aria-label="末尾へ"><svg viewBox="0 0 10 10"><path d="M7.500 1H9V9H7.500ZM1 1V9L7 5Z" fill="#444"/></svg></button>
    </div>
  </div>
  <div class="track" id="track"></div>
  <button class="settings" aria-label="タイムライン設定"><svg viewBox="0 0 12 12"><use href="#cog"/></svg></button>
</footer>
<script src="timeline.js"></script>
</body>
</html>
```
FILE: styles.css
```css
* { box-sizing: border-box; }
body {
  margin: 0;
  height: 100vh;
  display: flex;
  flex-direction: column;
  overflow: hidden;
  background: #fff;
  color: #444;
  font: 7px/12px "Noto Sans CJK JP", "Noto Sans", sans-serif;
  font-feature-settings: "palt";
}
button { border: 0; background: none; padding: 0; margin: 0; font: inherit; color: inherit; display: flex; align-items: center; font-feature-settings: inherit; }
svg { display: block; flex: none; }
.defs { position: absolute; width: 0; height: 0; }
.caret { flex: none; border: 2px solid transparent; border-top: 3px solid #333; border-bottom: 0; margin-left: 3px; }
.caret.dim { border-top-color: #999; }

.titlebar { height: 19px; flex: none; display: flex; align-items: center; padding: 0 5px 1px 4px; gap: 3px; }
.logo { width: 10px; height: 10px; }
.app-name { font: 7px/12px "Open Sans", sans-serif; color: #888; }
.window-buttons { margin-left: auto; display: flex; gap: 12px; }
.window-buttons button { width: 17px; justify-content: center; }
.window-buttons svg { width: 8px; height: 8px; fill: none; stroke: #888; stroke-width: .8px; }

.docbar { height: 20px; flex: none; display: flex; background: #c9c9c9; border-top: 2px solid #c4c4c4; }
.quick { width: 120px; display: flex; align-items: center; padding-left: 3px; gap: 10px; }
.quick svg { width: 11px; height: 11px; }
.quick .caret { margin-left: 1px; }
.doc-tab { flex: 1; display: flex; align-items: center; justify-content: center; gap: 3px; background: #f1f1f1; color: #333; position: relative; }
.doc-tab > svg { width: 10px; height: 10px; }
.tab-close { position: absolute; right: 4px; }
.tab-close svg { width: 8px; height: 8px; }
.new-tab { width: 18px; justify-content: center; background: #b9b9b9; border-left: 1px solid #ddd; }
.new-tab svg { width: 10px; height: 10px; }
.account { width: 128px; display: flex; align-items: center; gap: 10px; padding-left: 8px; }
.account svg { width: 11px; height: 11px; }
.account span { margin: 0 2px 0 3px; font-family: "Liberation Sans", sans-serif; }
.account .avatar { margin-left: 3px; }
.account .avatar svg { width: 15px; height: 15px; }

.ribbon { height: 53px; flex: none; display: flex; background: #f1f1f1; padding-left: 6px; }
.workspace-switch { width: 69px; height: 39px; margin: 6px 2px 0 0; justify-content: center; border: 1px solid #d4d4d4; border-radius: 3px; color: #333; }
.ribbon-main { flex: 1; }
.tabs { display: flex; height: 15px; padding-left: 8px; gap: 9px; }
.tab { padding: 0 7px; height: 14px; border-bottom: 2px solid transparent; }
.tab.active { color: #0a8fd0; border-bottom-color: #0a8fd0; }
.groups { display: flex; }
.group { padding: 0 3px; display: flex; flex-direction: column; align-items: center; }
.group + .group { border-left: 1px solid #ddd; padding-left: 2px; }
.group.pair { padding-right: 4px; }
.group + .group.auto { padding: 0 7px; }
.tools { display: flex; height: 24px; }
.tools button { width: 27px; height: 24px; justify-content: center; }
.tools svg { width: 24px; height: 24px; }
.svg-tag { font: bold 5px "Liberation Sans", sans-serif; fill: #fff; }
.group-label { height: 12px; }

.workspace { flex: 1; min-height: 0; display: grid; grid-template-columns: 189px 1fr 97px; grid-template-rows: 1fr auto; }
.panel-head { height: 15px; margin-left: 1px; border: 1px solid #cfcfcf; background: #f2f2f2; display: flex; align-items: center; gap: 4px; padding: 0 5px 0 2px; }
.browser .panel-head { margin-top: 2px; }
.collapse { font-size: 5px; color: #222; width: 9px; font-family: "DejaVu Sans", sans-serif; }
.dot { margin-left: auto; }
.dot svg { width: 8px; height: 8px; }
.tree { list-style: none; margin: 0; padding: 0; }
.browser > .tree { padding-top: 3px; }
.tree.child { padding-left: 11px; }
.row { height: 15px; display: flex; align-items: center; padding-left: 22px; white-space: nowrap; }
.tw { width: 8px; height: 10px; margin-right: 5px; }
.pill { height: 13px; display: flex; align-items: center; background: #f0f0f0; padding-right: 4px; }
.ic { width: 12px; height: 11px; margin: 0 6px 0 3px; }
.ic.eye { width: 12px; height: 9px; margin: 0 1px; }
.pill.solo .ic { margin: 0 6px 0 1px; height: 10px; }
.pill input { appearance: none; width: 9px; height: 9px; margin: 0 0 0 7px; border: 1px solid #444; border-radius: 50%; background: #fff; }
.bar { width: 3px; height: 12px; flex: none; }
.root { padding-left: 11px; }
.root .tw { margin-right: 6px; }
.root .eye { margin: 0 2px 0 1px; }
.selected { display: flex; align-items: center; min-width: 114px; height: 12px; padding-right: 3px; background: #8f8f8f; color: #fff; font-size: 6px; }
.selected .ic { margin: 0 7px 0 1px; }
.badge { width: 9px; height: 9px; margin-left: 3px; }
.pill.end { padding-right: 4px; margin-left: 2px; }
.pink { background: #f7b3b5; } .lime { background: #b5e066; } .blue { background: #5b92d6; } .yellow { background: #fbd377; }
.orange { background: #f79a66; } .teal { background: #6bd0d2; } .royal { background: #4d7be0; } .rose { background: #ef5f72; }
.red { background: #d95750; } .cyan { background: #5fd6ee; } .salmon { background: #f08488; } .coral { background: #fa7353; } .violet { background: #e58ac6; }

.viewport { display: flex; justify-content: center; align-items: flex-start; padding-top: 111px; }
.model { width: 352px; height: 330px; }
.cube-area { display: flex; justify-content: flex-end; padding: 2px 4px 0 0; }
.cube { width: 64px; height: 72px; }
.axis { font: 9px "Liberation Sans", sans-serif; }
.face { font-size: 13px; fill: #777; }
.face.small { font-size: 9px; }
.bottom { grid-column: 1 / -1; display: grid; grid-template-columns: 189px 1fr 189px; align-items: center; padding-bottom: 4px; }
.comment { padding-left: 15px; }
.navbar { justify-self: center; display: flex; gap: 3px; padding: 0 4px; height: 15px; background: #f3f3f3; }
.navbar svg { width: 11px; height: 11px; }
.navbar .caret { margin-left: 2px; }

.timeline { height: 28px; flex: none; display: flex; background: #f1f1f1; border-top: 1px solid #ddd; }
.playback { width: 88px; flex: none; }
.thumb { width: 34px; height: 3px; margin-left: 2px; background: #c4c4c4; }
.transport { display: flex; gap: 6px; padding: 8px 0 0 4px; }
.transport svg { width: 10px; height: 10px; }
.track { flex: 1; min-width: 0; overflow: hidden; display: grid; grid-template-columns: repeat(72, 15px); grid-template-rows: 8px 11px 3px 5px; align-content: start; }
.span { height: 5px; margin: 3px 1px 0; }
.span.pink { background: #f7adae; } .span.red { background: #d8655c; } .span.blue { background: #6799d3; } .span.cyan { background: #6bd0ea; }
.span.multi { background: linear-gradient(90deg, #f5a3a5 20%, #e5cf6e 20% 40%, #8ecf70 40% 60%, #5b92d6 60% 80%, #999 80%); }
.span.split { background: linear-gradient(90deg, #5fd0cf 50%, #4d7be0 50%); }
.feature { justify-content: center; }
.feature svg { width: 12px; height: 12px; }
.tick { width: 1px; height: 3px; justify-self: center; background: #bbb; }
.rail { grid-column: 1 / -1; height: 1px; margin-left: 8px; background: #bbb; }
.marker { grid-column: 1; width: 5px; height: 5px; margin-left: 4px; background: #fff; border: 1px solid #555; }
.settings { width: 26px; justify-content: center; padding-top: 3px; }
.settings svg { width: 11px; height: 11px; }
```
FILE: timeline.js
```js
const features = [
  "origin", "sketch", "flag", "box", "copy", "pin", "joint", "joint", "pin",
  ...Array(51).fill("joint"),
  "flag", "sketch", "sketch", "box", "sketch", "box", "copy", "group", "joint", "joint", "joint", "flag"
];
const spans = [
  ["multi", 1], ["pink", 8], ["blue", 5], ["pink", 4], ["red", 2], ["pink", 1], ["red", 15], ["pink", 4],
  ["cyan", 10], ["pink", 1], ["cyan", 6], ["pink", 1], ["blue", 1], ["pink", 4], ["split", 1], ["pink", 3],
  ["blue", 4], ["pink", 1]
];
const track = document.getElementById("track");
let html = "";
let column = 1;
for (const [color, count] of spans) {
  html += `<span class="span ${color}" style="grid-area:1/${column}/2/span ${count}"></span>`;
  column += count;
}
features.forEach((name, i) => {
  html += `<button class="feature" aria-label="フィーチャ ${i + 1}" style="grid-area:2/${i + 1}"><svg><use href="#tl-${name}"/></svg></button>`;
  html += `<span class="tick" style="grid-area:3/${i + 1}"></span>`;
});
html += `<span class="rail" style="grid-row:4"></span><span class="marker" style="grid-row:4"></span>`;
track.innerHTML = html;
```
